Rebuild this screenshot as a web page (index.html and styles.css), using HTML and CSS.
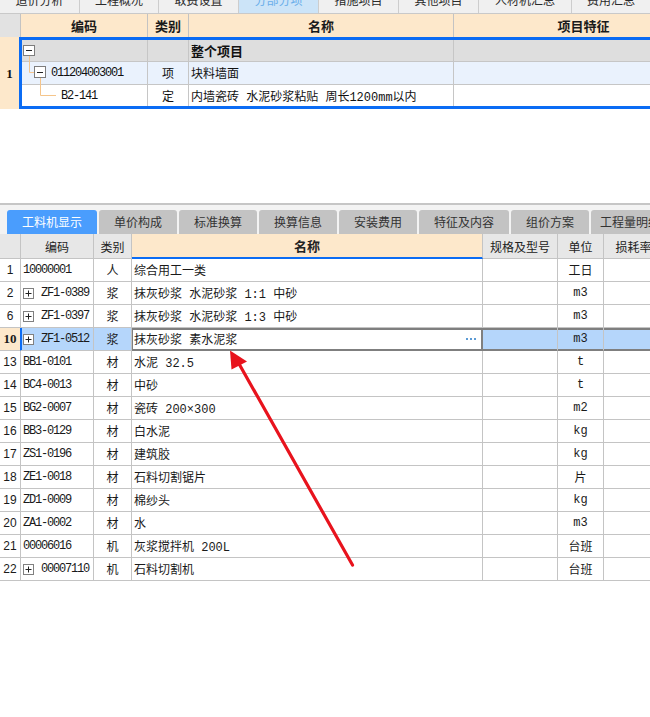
FILE: index.html
```html
<!DOCTYPE html>
<html lang="zh-CN">
<head>
<meta charset="utf-8">
<title>分部分项</title>
<link rel="stylesheet" href="styles.css">
</head>
<body>
<nav class="top-tabs">
  <span class="ttab">造价分析</span>
  <span class="ttab">工程概况</span>
  <span class="ttab">取费设置</span>
  <span class="ttab active">分部分项</span>
  <span class="ttab">措施项目</span>
  <span class="ttab">其他项目</span>
  <span class="ttab">人材机汇总</span>
  <span class="ttab">费用汇总</span>
</nav>

<section class="top-grid">
  <div class="thead">
    <div class="hc rn"></div>
    <div class="hc">编码</div>
    <div class="hc">类别</div>
    <div class="hc">名称</div>
    <div class="hc">项目特征</div>
  </div>
  <div class="tbody">
    <div class="rncol">
      <div class="rnc ra"></div>
      <div class="rnc rb">1</div>
      <div class="rnc rc"></div>
    </div>
    <div class="frame">
      <div class="trow ra gray">
        <div class="tc code">
          <svg class="tree" width="14" height="21" viewBox="0 0 14 21"><path d="M7.5 15.5V22" stroke="#f5c58b"/><rect x="1.5" y="5.5" width="11" height="10" fill="#fff" stroke="#7d7d7d"/><path d="M4 10.5H10" stroke="#222"/></svg>
        </div>
        <div class="tc mid"></div>
        <div class="tc bold">整个项目</div>
        <div class="tc"></div>
      </div>
      <div class="trow rb blue">
        <div class="tc code">
          <svg class="tree" width="26" height="22" viewBox="0 0 26 22"><path d="M7.5 -1V10.5H12M18.5 15.5V24" stroke="#f5c58b" fill="none"/><rect x="12.5" y="4.5" width="11" height="11" fill="#fff" stroke="#7d7d7d"/><path d="M15 10.5H21" stroke="#222"/></svg>
          <span class="mono sp3">011204003001</span>
        </div>
        <div class="tc mid">项</div>
        <div class="tc">块料墙面</div>
        <div class="tc"></div>
      </div>
      <div class="trow rc last">
        <div class="tc code">
          <svg class="tree" width="38" height="21" viewBox="0 0 38 21"><path d="M18.5 -1V10.5H34" stroke="#f5c58b" fill="none"/></svg>
          <span class="mono sp1">B2-141</span>
        </div>
        <div class="tc mid">定</div>
        <div class="tc">内墙瓷砖 水泥砂浆粘贴 周长1200mm以内</div>
        <div class="tc"></div>
      </div>
    </div>
  </div>
</section>

<div class="spacer"></div>

<section class="lower">
  <nav class="btabs">
    <span class="btab wide active">工料机显示</span>
    <span class="btab">单价构成</span>
    <span class="btab">标准换算</span>
    <span class="btab">换算信息</span>
    <span class="btab">安装费用</span>
    <span class="btab wide">特征及内容</span>
    <span class="btab">组价方案</span>
    <span class="btab">工程量明细</span>
  </nav>

  <div class="grid">
    <div class="lrow head">
      <div class="lc"></div>
      <div class="lc">编码</div>
      <div class="lc">类别</div>
      <div class="lc name-h">名称</div>
      <div class="lc">规格及型号</div>
      <div class="lc">单位</div>
      <div class="lc">损耗率</div>
    </div>

    <div class="lrow"><div class="lc num">1</div><div class="lc code">10000001</div><div class="lc mid">人</div><div class="lc name">综合用工一类</div><div class="lc"></div><div class="lc mid">工日</div><div class="lc"></div></div>

    <div class="lrow"><div class="lc num">2</div><div class="lc code"><svg class="pm" width="11" height="11" viewBox="0 0 11 11"><rect x="0.5" y="0.5" width="10" height="10" fill="#fff" stroke="#808080"/><path d="M2.5 5.5H8.5M5.5 2.5V8.5" stroke="#222"/></svg><span>ZF1-0389</span></div><div class="lc mid">浆</div><div class="lc name">抹灰砂浆 水泥砂浆 1:1 中砂</div><div class="lc"></div><div class="lc mid">m3</div><div class="lc"></div></div>

    <div class="lrow"><div class="lc num">6</div><div class="lc code"><svg class="pm" width="11" height="11" viewBox="0 0 11 11"><rect x="0.5" y="0.5" width="10" height="10" fill="#fff" stroke="#808080"/><path d="M2.5 5.5H8.5M5.5 2.5V8.5" stroke="#222"/></svg><span>ZF1-0397</span></div><div class="lc mid">浆</div><div class="lc name">抹灰砂浆 水泥砂浆 1:3 中砂</div><div class="lc"></div><div class="lc mid">m3</div><div class="lc"></div></div>

    <div class="lrow sel"><div class="lc num selnum">10</div><div class="lc code selcode"><svg class="pm" width="11" height="11" viewBox="0 0 11 11"><rect x="0.5" y="0.5" width="10" height="10" fill="#fff" stroke="#808080"/><path d="M2.5 5.5H8.5M5.5 2.5V8.5" stroke="#222"/></svg><span>ZF1-0512</span></div><div class="lc mid selblue">浆</div><div class="lc name selname"><span>抹灰砂浆 素水泥浆</span><svg class="dots" width="11" height="3" viewBox="0 0 11 3"><rect x="0" y="0" width="2" height="2" fill="#5b9bd5"/><rect x="4" y="0" width="2" height="2" fill="#5b9bd5"/><rect x="8" y="0" width="2" height="2" fill="#5b9bd5"/></svg></div><div class="lc selright"></div><div class="lc mid selright">m3</div><div class="lc selright"></div></div>

    <div class="lrow"><div class="lc num">13</div><div class="lc code">BB1-0101</div><div class="lc mid">材</div><div class="lc name">水泥 32.5</div><div class="lc"></div><div class="lc mid">t</div><div class="lc"></div></div>
    <div class="lrow"><div class="lc num">14</div><div class="lc code">BC4-0013</div><div class="lc mid">材</div><div class="lc name">中砂</div><div class="lc"></div><div class="lc mid">t</div><div class="lc"></div></div>
    <div class="lrow"><div class="lc num">15</div><div class="lc code">BG2-0007</div><div class="lc mid">材</div><div class="lc name">瓷砖 200×300</div><div class="lc"></div><div class="lc mid">m2</div><div class="lc"></div></div>
    <div class="lrow"><div class="lc num">16</div><div class="lc code">BB3-0129</div><div class="lc mid">材</div><div class="lc name">白水泥</div><div class="lc"></div><div class="lc mid">kg</div><div class="lc"></div></div>
    <div class="lrow"><div class="lc num">17</div><div class="lc code">ZS1-0196</div><div class="lc mid">材</div><div class="lc name">建筑胶</div><div class="lc"></div><div class="lc mid">kg</div><div class="lc"></div></div>
    <div class="lrow"><div class="lc num">18</div><div class="lc code">ZE1-0018</div><div class="lc mid">材</div><div class="lc name">石料切割锯片</div><div class="lc"></div><div class="lc mid">片</div><div class="lc"></div></div>
    <div class="lrow"><div class="lc num">19</div><div class="lc code">ZD1-0009</div><div class="lc mid">材</div><div class="lc name">棉纱头</div><div class="lc"></div><div class="lc mid">kg</div><div class="lc"></div></div>
    <div class="lrow"><div class="lc num">20</div><div class="lc code">ZA1-0002</div><div class="lc mid">材</div><div class="lc name">水</div><div class="lc"></div><div class="lc mid">m3</div><div class="lc"></div></div>
    <div class="lrow"><div class="lc num">21</div><div class="lc code">00006016</div><div class="lc mid">机</div><div class="lc name">灰浆搅拌机 200L</div><div class="lc"></div><div class="lc mid">台班</div><div class="lc"></div></div>
    <div class="lrow"><div class="lc num">22</div><div class="lc code"><svg class="pm" width="11" height="11" viewBox="0 0 11 11"><rect x="0.5" y="0.5" width="10" height="10" fill="#fff" stroke="#808080"/><path d="M2.5 5.5H8.5M5.5 2.5V8.5" stroke="#222"/></svg><span>00007110</span></div><div class="lc mid">机</div><div class="lc name">石料切割机</div><div class="lc"></div><div class="lc mid">台班</div><div class="lc"></div></div>
  </div>
</section>

<svg class="arrow" width="650" height="717" viewBox="0 0 650 717">
  <path d="M352.5 565 L238 362" stroke="#e8131d" stroke-width="3.2" stroke-linecap="round" fill="none"/>
  <polygon points="230,350.5 231.5,369.5 247,361.5" fill="#e8131d"/>
</svg>
</body>
</html>
```

FILE: styles.css
```css
* { box-sizing: border-box; margin: 0; padding: 0; }

html, body {
  width: 650px;
  height: 717px;
  overflow: hidden;
  background: #ffffff;
}

body {
  position: relative;
  font-family: "Liberation Mono", "Noto Sans CJK SC", monospace;
  font-size: 12px;
  color: #111;
}

/* ---------- top tabs (cut off) ---------- */
.top-tabs {
  display: grid;
  grid-template-columns: 80px 79px 80px 80px 80px 80px 93px 79px;
  height: 14px;
  border-bottom: 1px solid #c9c9c9;
  background: #f0f0f0;
  overflow: hidden;
}
.ttab {
  height: 22px;
  margin-top: -8px;
  padding-top: 1px;
  border-right: 1px solid #cdcdcd;
  font-family: "Noto Sans CJK SC", sans-serif;
  font-size: 12px;
  line-height: 14px;
  text-align: center;
  color: #2a2a2a;
}
.ttab.active {
  background: #cce4f8;
  color: #6aaeea;
}

/* ---------- top grid ---------- */
.thead {
  display: grid;
  grid-template-columns: 21px 127px 41px 265px 260px;
  height: 23px;
  background: #fde8cb;
  overflow: hidden;
}
.hc {
  display: flex;
  align-items: center;
  justify-content: center;
  border-right: 1px solid #c3c3c3;
  font-family: "Noto Sans CJK SC", sans-serif;
  font-weight: 700;
  font-size: 13px;
  color: #1a1a1a;
}
.hc.rn { background: #e2e2e2; }

.tbody {
  display: flex;
}
.rncol {
  width: 19px;
  flex: none;
  background: #fde8cb;
  padding: 3px 0;
}
.rnc {
  display: flex;
  align-items: center;
  justify-content: center;
  font-family: "Liberation Serif", serif;
  font-weight: 700;
  font-size: 13px;
}
.rnc.ra { height: 22px; }
.rnc.rb { height: 23px; }
.rnc.rc { height: 21px; }

.frame {
  flex: 1;
  border: 3px solid #0b6cf4;
  border-right: none;
  overflow: hidden;
}
.trow {
  display: grid;
  grid-template-columns: 126px 41px 265px 260px;
}
.trow.ra { height: 22px; }
.trow.rb { height: 23px; }
.trow.rc { height: 21px; }
.trow.gray { background: #dedede; }
.trow.blue { background: #eaf2fd; }
.trow.last { background: #fff; }

.tc {
  display: flex;
  align-items: center;
  padding-left: 2px;
  border-right: 1px solid #c6c6c6;
  border-bottom: 1px solid #c6c6c6;
  font-family: "Liberation Mono", "Noto Sans CJK SC", monospace;
  font-size: 12px;
  white-space: nowrap;
  overflow: visible;
}
.trow.last .tc { border-bottom: none; }
.tc.code { padding-left: 0; align-items: flex-start; }
.tc.code .mono { align-self: center; }
.tc.mid { justify-content: center; padding-left: 0; }
.tc.bold { font-family: "Noto Sans CJK SC", sans-serif; font-weight: 700; font-size: 13px; }

.tree { display: block; overflow: visible; flex: none; }
.mono {
  font-family: "Liberation Mono", monospace;
  letter-spacing: -1.2px;
}
.sp3 { margin-left: 3px; }
.sp1 { margin-left: 1px; }

.spacer { height: 94px; }

/* ---------- lower part ---------- */
.lower {
  border-top: 2px solid #c6c6c6;
}
.btabs {
  display: flex;
  gap: 2px;
  height: 29px;
  padding: 5px 0 0 7px;
  background: #f3f3f3;
  overflow: hidden;
  white-space: nowrap;
}
.btab {
  flex: none;
  width: 78px;
  height: 24px;
  border-radius: 3px 3px 0 0;
  background: #c3c3c3;
  color: #333;
  font-family: "Noto Sans CJK SC", sans-serif;
  font-size: 12px;
  line-height: 24px;
  text-align: center;
}
.btab.wide { width: 90px; }
.btab.active {
  background: #4a9dfd;
  color: #fff;
}

.grid { background: #fff; }
.lrow {
  display: grid;
  grid-template-columns: 21px 73px 38px 351px 75px 46px 60px;
  height: 23px;
  overflow: hidden;
}
.lc {
  display: flex;
  align-items: center;
  border-right: 1px solid #c4c4c4;
  border-bottom: 1px solid #c4c4c4;
  font-family: "Noto Sans CJK SC", sans-serif;
  font-size: 12px;
  white-space: nowrap;
  color: #1a1a1a;
}
.lrow.head {
  height: 25px;
  background: #e7e7e7;
}
.lrow.head .lc {
  justify-content: center;
  color: #222;
}
.lrow.head .name-h {
  background: #fde8cb;
  border-bottom: 2px solid #0b6cf4;
  font-weight: 700;
  font-size: 13px;
}

.lc.num {
  justify-content: center;
  font-family: "Liberation Sans", sans-serif;
  font-size: 12px;
}
.lc.code {
  padding-left: 2px;
  font-family: "Liberation Mono", monospace;
  letter-spacing: -1.2px;
}
.pm { display: block; flex: none; margin-right: 7px; }
.lc.mid {
  justify-content: center;
  font-family: "Liberation Mono", "Noto Sans CJK SC", monospace;
}
.lc.name {
  padding-left: 2px;
  font-family: "Liberation Mono", "Noto Sans CJK SC", monospace;
}

/* selected row */
.selnum {
  background: #fde8cb;
  border-right-color: #0b6cf4;
  font-family: "Liberation Serif", serif !important;
  font-weight: 700;
  font-size: 13px !important;
}
.selcode {
  background: #b5d6fb;
  box-shadow: inset 1px 0 0 #0b6cf4;
}
.selblue { background: #b5d6fb; }
.selname {
  justify-content: space-between;
  padding-left: 3px;
  padding-right: 5px;
  background: #fff;
  border-right-color: #7f7f7f;
  border-bottom-color: #7f7f7f;
  box-shadow: inset 1px 0 0 #7f7f7f, inset -1px 0 0 #7f7f7f, inset 0 2px 0 #7f7f7f, inset 0 -1px 0 #7f7f7f;
}
.dots { display: block; flex: none; }
.selright {
  background: #b5d6fb;
  border-bottom-color: #7f7f7f;
  box-shadow: inset 0 2px 0 #7f7f7f, inset 0 -1px 0 #7f7f7f;
}

/* annotation arrow drawn over the screenshot */
.arrow {
  position: absolute;
  left: 0;
  top: 0;
  pointer-events: none;
}
```
